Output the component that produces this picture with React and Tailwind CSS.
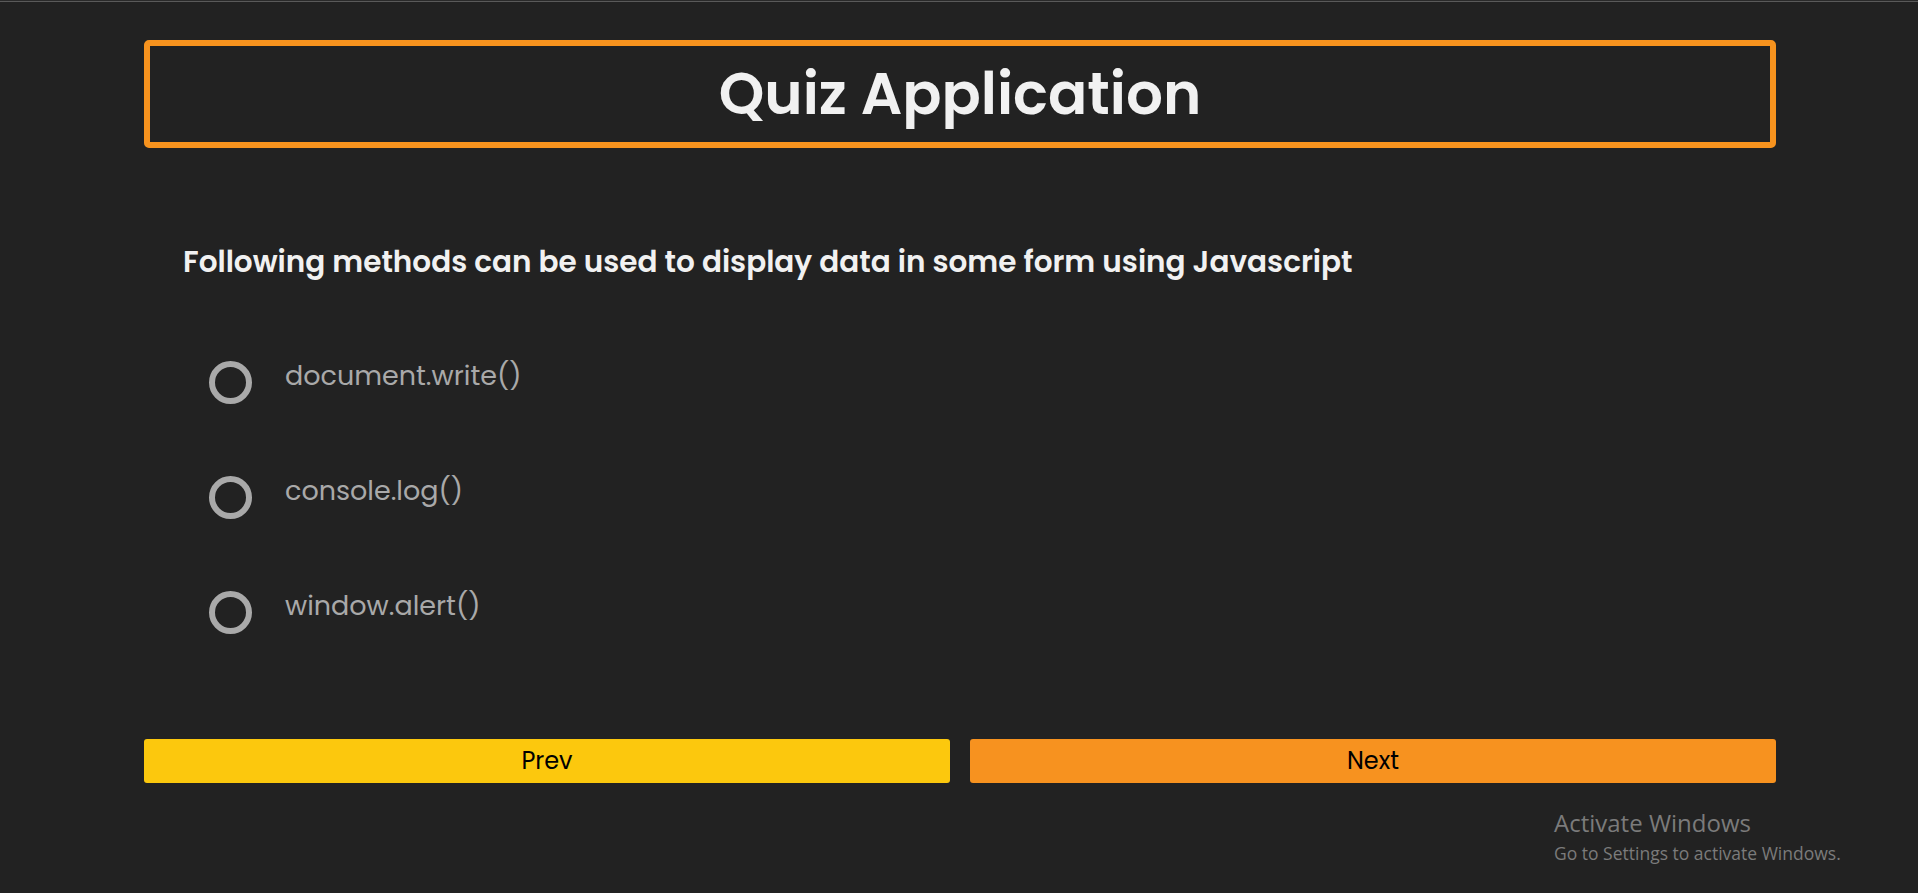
import React from "react";

const options = ["document.write()", "console.log()", "window.alert()"];

export default function App() {
  return (
    <div
      className="relative min-h-[893px] w-full overflow-hidden bg-[#222222]"
      style={{ fontFamily: "Poppins, Inter, 'Noto Sans', sans-serif" }}
    >
      <div className="h-px bg-[#2a2a2a]" />
      <div className="h-px bg-[#5a5a5a]" />
      <div className="ml-[144px] w-[1632px] pt-[38px]">
        <header className="flex h-[108px] items-center justify-center rounded-[5px] border-[6px] border-[#f7931e]">
          <h1 className="text-[58px] font-semibold leading-none text-[#f1f1f1]">
            Quiz Application
          </h1>
        </header>

        <div className="pl-[39px] pt-[96px]">
          <h2 className="text-[29.5px] font-semibold leading-[36px] text-[#f1f1f1]">
            Following methods can be used to display data in some form using Javascript
          </h2>
        </div>

        <ul className="mt-[45px] pl-[65px]">
          {options.map((o) => (
            <li key={o} className="flex h-[115px] items-center gap-[33px]">
              <span className="h-[43px] w-[43px] shrink-0 rounded-full border-[6px] border-[#a9a9a9]" />
              <span className="-mt-[15px] text-[27px] leading-none text-[#a9a9a9]">{o}</span>
            </li>
          ))}
        </ul>

        <div className="mt-[69px] grid grid-cols-2 gap-5">
          <button className="h-[44px] rounded-[3px] bg-[#fcc80d] text-[24px] leading-none text-black">
            Prev
          </button>
          <button className="h-[44px] rounded-[3px] bg-[#f7921f] text-[24px] leading-none text-black">
            Next
          </button>
        </div>
      </div>

      <div
        className="absolute left-[1554px] top-[808px] text-[#7b7b7b]"
        style={{ fontFamily: "'Open Sans', 'Noto Sans', sans-serif" }}
      >
        <div className="text-[24px] leading-[30px]">Activate Windows</div>
        <div className="text-[17.5px] leading-[30px]">Go to Settings to activate Windows.</div>
      </div>
    </div>
  );
}
